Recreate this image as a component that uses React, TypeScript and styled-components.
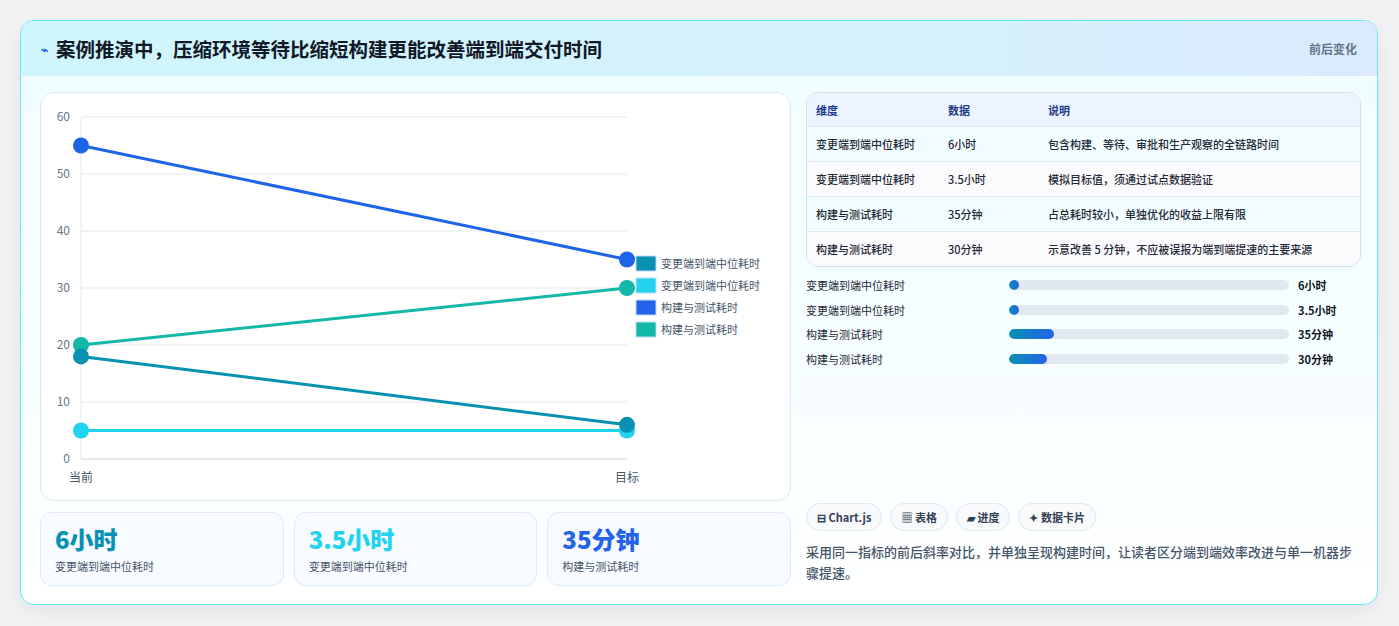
import React from "react";
import styled, { createGlobalStyle } from "styled-components";

const Global = createGlobalStyle`
  html,body{margin:0;padding:0;background:#f1f2f4;}
  body{font-family:"Noto Sans CJK SC","Noto Sans",sans-serif;}
  *{box-sizing:border-box;}
`;
const Page = styled.div`padding:20px 21px 22px 20px;`;
const Card = styled.div`
  border:1px solid #67e8f9;border-radius:14px;overflow:hidden;
  background:linear-gradient(180deg,#effdff 0%,#f7feff 60%,#ffffff 100%);
  box-shadow:0 6px 18px rgba(0,0,0,0.06);
`;
const Header = styled.div`
  height:55px;display:flex;align-items:center;justify-content:space-between;
  padding:0 20px;background:linear-gradient(90deg,#cff6fc 0%,#d6f0fd 70%,#dbeafe 100%);
`;
const Title = styled.h1`margin:0;font-size:19.5px;font-weight:700;color:#111827;display:flex;align-items:center;gap:8px;`;
const Bolt = styled.span`color:#2563eb;font-size:12px;`;
const HeadTag = styled.span`font-size:12px;color:#64748b;font-weight:700;`;
const Body = styled.div`display:grid;grid-template-columns:751px 555px;gap:15px;padding:16px 19px 18px 19px;`;
const Col = styled.div`display:flex;flex-direction:column;gap:11px;`;
const ChartBox = styled.div`height:409px;background:#fff;border:1px solid #e2e8f0;border-radius:14px;`;
const Stats = styled.div`display:grid;grid-template-columns:repeat(3,1fr);gap:10px;`;
const Stat = styled.div`height:74px;border:1px solid #dbeafe;border-radius:12px;background:#f8fbff;padding:9px 14px;`;
const StatNum = styled.div<{ c: string }>`font-size:24px;font-weight:800;color:${p => p.c};line-height:34px;`;
const StatLbl = styled.div`font-size:11px;color:#475569;margin-top:2px;`;
const Table = styled.div`border:1px solid #d6dee8;border-radius:12px;overflow:hidden;`;
const Row = styled.div<{ head?: boolean; alt?: boolean }>`
  display:grid;grid-template-columns:132px 100px 1fr;padding-left:9px;align-items:center;
  height:${p => (p.head ? 33 : 35)}px;font-size:11px;
  color:${p => (p.head ? "#1e3a8a" : "#1f2937")};font-weight:${p => (p.head ? 700 : 500)};
  background:${p => (p.head ? "#eef4ff" : p.alt ? "#fbfafc" : "#f2fdff")};
  border-top:${p => (p.head ? "none" : "1px solid #e2e8f0")};
`;
const Bars = styled.div`display:flex;flex-direction:column;gap:8px;margin-top:10px;`;
const BarRow = styled.div`display:grid;grid-template-columns:203px 280px 1fr;align-items:center;font-size:11px;color:#1f2937;height:16.5px;`;
const Track = styled.div`height:10px;border-radius:5px;background:#e2e8f0;overflow:hidden;`;
const Fill = styled.div`height:100%;border-radius:5px;background:linear-gradient(90deg,#0891b2,#2563eb);`;
const BarVal = styled.span`font-weight:700;padding-left:9px;color:#111827;`;
const Spacer = styled.div`flex:1;`;
const Chips = styled.div`display:flex;gap:8px;`;
const Chip = styled.span`height:28px;padding:0 10px;display:inline-flex;align-items:center;gap:4px;border:1px solid #e2e8f0;border-radius:14px;background:#f8fafc;font-size:11px;font-weight:700;color:#334155;`;
const Note = styled.p`margin:10px 0 3px;font-size:13px;line-height:21px;color:#475569;font-weight:500;`;

const rows = [
  ["变更端到端中位耗时", "6小时", "包含构建、等待、审批和生产观察的全链路时间"],
  ["变更端到端中位耗时", "3.5小时", "模拟目标值，须通过试点数据验证"],
  ["构建与测试耗时", "35分钟", "占总耗时较小，单独优化的收益上限有限"],
  ["构建与测试耗时", "30分钟", "示意改善 5 分钟，不应被误报为端到端提速的主要来源"],
];
const bars: [string, string, number][] = [
  ["变更端到端中位耗时", "6小时", 6],
  ["变更端到端中位耗时", "3.5小时", 3.5],
  ["构建与测试耗时", "35分钟", 35],
  ["构建与测试耗时", "30分钟", 30],
];

const X0 = 40, X1 = 586, Y0 = 366, SC = 5.7;
const y = (v: number) => Y0 - v * SC;
const series = [
  { c: "#1e64e8", a: 55, b: 35 },
  { c: "#14b8a6", a: 20, b: 30 },
  { c: "#22d3ee", a: 5, b: 5 },
  { c: "#0891b2", a: 18, b: 6 },
];
const legend = [
  ["#0891b2", "变更端到端中位耗时"],
  ["#22d3ee", "变更端到端中位耗时"],
  ["#2563eb", "构建与测试耗时"],
  ["#14b8a6", "构建与测试耗时"],
];

function Chart() {
  return (
    <svg width="749" height="407" style={{ display: "block" }} fontFamily="Noto Sans CJK SC, sans-serif">
      {[0, 10, 20, 30, 40, 50, 60].map(v => (
        <g key={v}>
          <line x1={X0} x2={X1} y1={y(v)} y2={y(v)} stroke={v === 0 ? "#cbd5e1" : "#e2e8f0"} />
          <text x={X0 - 11} y={y(v) + 4} textAnchor="end" fontSize="12" fill="#64748b">{v}</text>
        </g>
      ))}
      <line x1={X0} x2={X0} y1={y(60)} y2={Y0} stroke="#e2e8f0" />
      <text x={X0} y={Y0 + 23} textAnchor="middle" fontSize="12" fill="#475569">当前</text>
      <text x={X1} y={Y0 + 23} textAnchor="middle" fontSize="12" fill="#475569">目标</text>
      {series.map((s, i) => (
        <g key={i}>
          <line x1={X0} y1={y(s.a)} x2={X1} y2={y(s.b)} stroke={s.c} strokeWidth="3" />
          <circle cx={X0} cy={y(s.a)} r="8" fill={s.c} />
          <circle cx={X1} cy={y(s.b)} r="8" fill={s.c} />
        </g>
      ))}
      {legend.map(([c, t], i) => (
        <g key={i}>
          <rect x={595} y={163 + i * 22} width={20} height={15} fill={c} stroke="#bfdbfe" />
          <text x={620} y={175 + i * 22} fontSize="11" fill="#475569">{t}</text>
        </g>
      ))}
    </svg>
  );
}

export default function App() {
  return (
    <Page>
      <Global />
      <Card>
        <Header>
          <Title><Bolt>⌁</Bolt>案例推演中，压缩环境等待比缩短构建更能改善端到端交付时间</Title>
          <HeadTag>前后变化</HeadTag>
        </Header>
        <Body>
          <Col>
            <ChartBox><Chart /></ChartBox>
            <Stats>
              <Stat><StatNum c="#0891b2">6小时</StatNum><StatLbl>变更端到端中位耗时</StatLbl></Stat>
              <Stat><StatNum c="#22d3ee">3.5小时</StatNum><StatLbl>变更端到端中位耗时</StatLbl></Stat>
              <Stat><StatNum c="#2563eb">35分钟</StatNum><StatLbl>构建与测试耗时</StatLbl></Stat>
            </Stats>
          </Col>
          <Col style={{ gap: 0 }}>
            <Table>
              <Row head><span>维度</span><span>数据</span><span>说明</span></Row>
              {rows.map((r, i) => (
                <Row key={i} alt={i % 2 === 1}><span>{r[0]}</span><span>{r[1]}</span><span>{r[2]}</span></Row>
              ))}
            </Table>
            <Bars>
              {bars.map(([l, v, n], i) => (
                <BarRow key={i}>
                  <span>{l}</span>
                  <Track><Fill style={{ width: `${Math.max(3.5, (n / 220) * 100)}%` }} /></Track>
                  <BarVal>{v}</BarVal>
                </BarRow>
              ))}
            </Bars>
            <Spacer />
            <Chips>
              <Chip>⊟ Chart.js</Chip><Chip>▦ 表格</Chip><Chip>▰ 进度</Chip><Chip>✦ 数据卡片</Chip>
            </Chips>
            <Note>采用同一指标的前后斜率对比，并单独呈现构建时间，让读者区分端到端效率改进与单一机器步骤提速。</Note>
          </Col>
        </Body>
      </Card>
    </Page>
  );
}
